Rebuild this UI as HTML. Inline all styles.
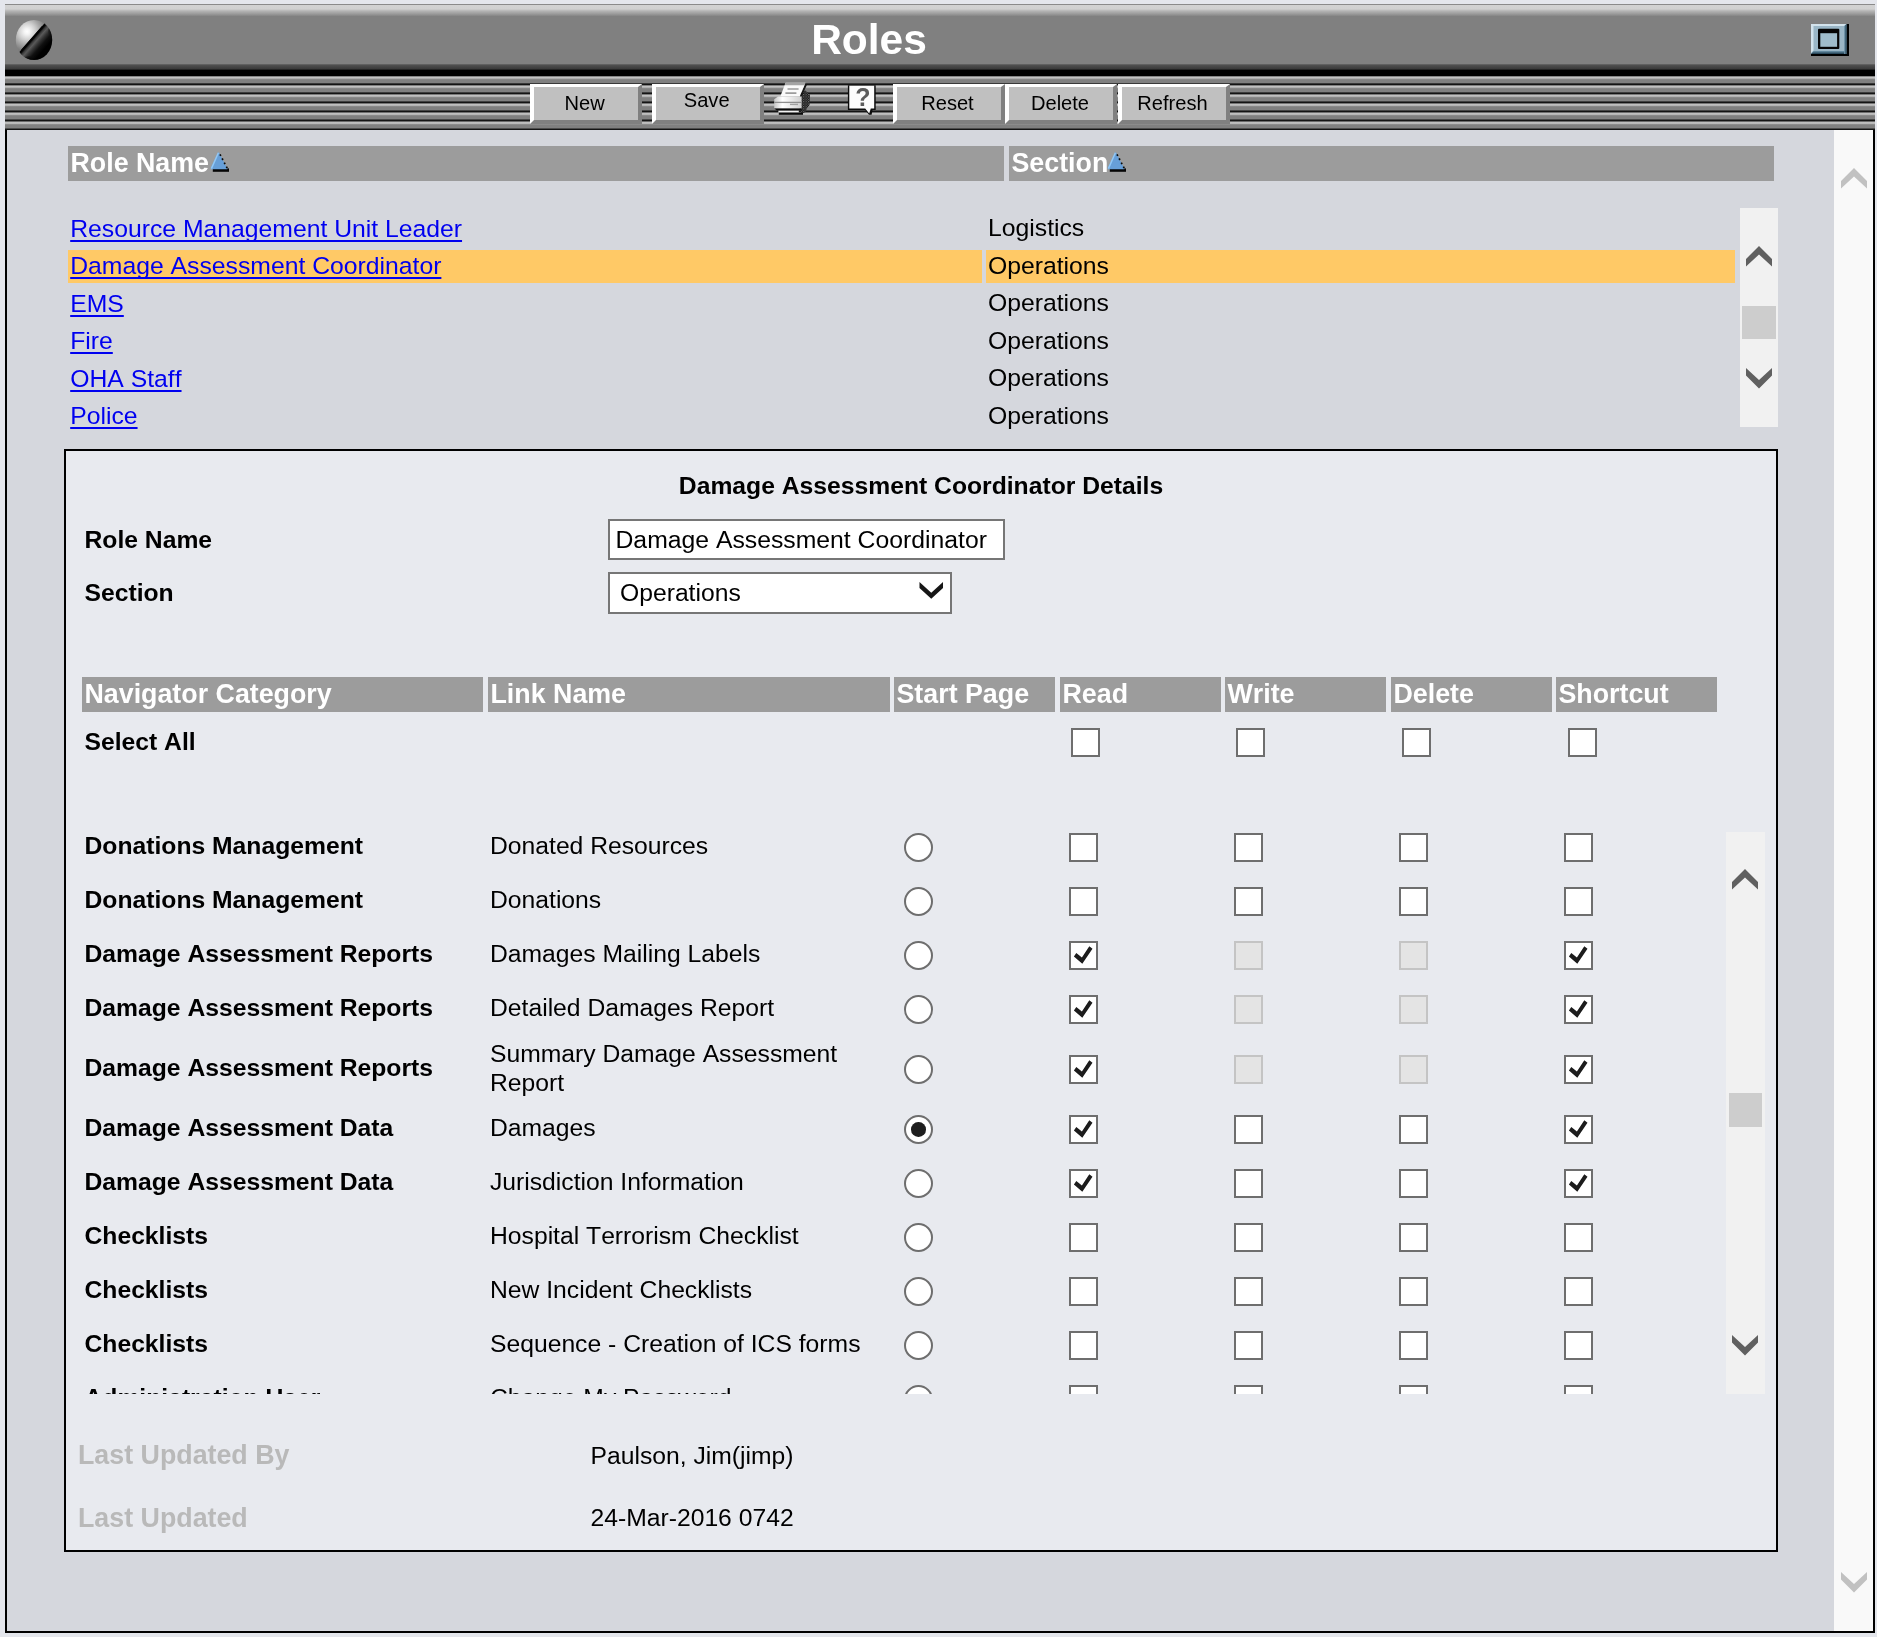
<!DOCTYPE html>
<html lang="en">
<head>
<meta charset="utf-8">
<title>Roles</title>
<style>
html,body{margin:0;padding:0;}
body{width:1877px;height:1637px;overflow:hidden;position:relative;background:#e4e6ec;font-family:"Liberation Sans",sans-serif;font-size:24.7px;font-kerning:none;color:#000;}
div,span,a{box-sizing:border-box;}
#wrap{position:absolute;left:0;top:0;width:1877px;height:1637px;overflow:hidden;will-change:transform;}
.abs{position:absolute;}
/* header */
#hdr{position:absolute;left:5px;top:4px;width:1870px;height:72px;background:linear-gradient(to bottom,#8a8a8a 0,#8a8a8a 1px,#d2d2d2 1px,#d0d0d0 5px,#b4b4b4 7px,#9a9a9a 10px,#808080 12.5px,#808080 59.5px,#505050 61px,#454545 63px,#3a3a3a 65px,#000 66.3px,#000 72px);}
#title{position:absolute;left:0;top:0;width:1728px;text-align:center;font-weight:bold;font-size:42.5px;line-height:72px;color:#fff;white-space:nowrap;}
#tb{position:absolute;left:5px;top:75.8px;width:1870px;height:54.2px;background:repeating-linear-gradient(to bottom,#404040 0,#b0b0b0 0.8px,#c3c3c3 1.5px,#c3c3c3 2.1px,#929292 3.0px,#808080 3.8px,#808080 6.6px,#4c4c4c 7.3px,#141414 7.9px,#141414 8.5px,#404040 9.04px);}
.btn{position:absolute;top:84px;height:40px;width:112px;background:#c0c0c0;border-style:solid;border-width:3px 4px 4px 4px;border-color:#fff #808080 #808080 #fff;font-size:20.1px;text-align:center;line-height:33px;padding-right:2.6px;white-space:nowrap;}
/* main panel */
#panel{position:absolute;left:5px;top:130px;width:1870px;height:1503px;border:2px solid #000;border-top:0;background:#d5d7dd;}
#vsb{position:absolute;left:1834px;top:130px;width:39px;height:1501px;background:#f9f9f9;}
.hd{position:absolute;background:#9c9c9c;color:#fff;font-weight:bold;white-space:nowrap;}
.lh{top:146px;height:35px;line-height:34.4px;font-size:26.8px;padding-left:2.5px;}
.row{position:absolute;left:70.2px;font-size:24.74px;height:32px;line-height:32px;white-space:nowrap;}
.row a{color:#0000f0;text-decoration:underline;text-decoration-skip-ink:none;text-underline-offset:3px;text-decoration-thickness:1.8px;}
.sec{position:absolute;left:988px;font-size:24.74px;height:32px;line-height:32px;white-space:nowrap;}
.hl{position:absolute;top:250px;height:33px;background:#ffc966;}
#box{position:absolute;left:64px;top:449px;width:1714px;height:1103px;border:2px solid #000;background:#e8eaef;}
.th{top:677px;height:35px;line-height:34.6px;font-size:26.8px;padding-left:2.5px;}
.b{font-weight:bold;}
.tclip{position:absolute;left:64px;width:1714px;overflow:hidden;}
.cat{position:absolute;left:20.5px;font-weight:bold;line-height:32px;white-space:nowrap;}
.lnk{position:absolute;left:426px;line-height:29px;white-space:nowrap;}
.lnk{padding-top:1.5px}
.rad{position:absolute;left:840px;width:29px;height:29px;border-radius:50%;border:2px solid #6e6e6e;background:#fff;}
.rad.on::after{content:"";position:absolute;left:5.2px;top:5.2px;width:14.6px;height:14.6px;border-radius:50%;background:#1e1e1e;}
.cb{position:absolute;width:29px;height:29px;border:2px solid #6e6e6e;background:#fff;}
.cb.dis{border-color:#c4c4c4;background:#e4e4e4;}
.cb.ck::after{content:"";position:absolute;left:0;top:0;width:25px;height:25px;background:#1c1c1c;clip-path:polygon(2.9px 13.5px,5.3px 10.1px,10.9px 14.5px,18.3px 3.2px,21.5px 5.7px,11.3px 20.8px);}
.sb{position:absolute;background:#f1f1f1;}
.thumb{position:absolute;background:#cdcdcd;}
.gl{color:#b9b9b9;font-weight:bold;position:absolute;white-space:nowrap;line-height:32px;font-size:26.8px;}
.val{position:absolute;white-space:nowrap;line-height:32px;}
svg{position:absolute;overflow:visible;}

</style>
</head>
<body>
<div id="wrap">
<div id="panel"></div>
<div id="vsb"></div>
<svg style="left:1841px;top:168px" width="26" height="21" viewBox="0 0 26 21"><path d="M0 13 L13 0 L26 13 L26 20.5 L13 8.5 L0 20.5 Z" fill="#c1c1c1"/></svg>
<svg style="left:1841px;top:1572px" width="26" height="21" viewBox="0 0 26 21"><path d="M0 0 L13 12 L26 0 L26 7.5 L13 20.5 L0 7.5 Z" fill="#c1c1c1"/></svg>

<div id="hdr"><div id="title">Roles</div></div>
<div id="tb"></div>
<svg style="left:15px;top:19px" width="38" height="42" viewBox="0 0 38 42">
 <defs>
  <radialGradient id="bg1" gradientUnits="userSpaceOnUse" cx="12" cy="12.5" r="24"><stop offset="0" stop-color="#ffffff"/><stop offset="0.12" stop-color="#f4f4f4"/><stop offset="0.35" stop-color="#cfcfcf"/><stop offset="0.55" stop-color="#a8a8a8"/><stop offset="0.8" stop-color="#808080"/><stop offset="1" stop-color="#707070"/></radialGradient>
  <linearGradient id="bg2" gradientUnits="userSpaceOnUse" x1="17" y1="18.5" x2="29.8" y2="29.7"><stop offset="0" stop-color="#000"/><stop offset="0.1" stop-color="#040404"/><stop offset="0.2" stop-color="#3a3a3a"/><stop offset="0.32" stop-color="#5a5a5a"/><stop offset="0.5" stop-color="#343434"/><stop offset="0.72" stop-color="#101010"/><stop offset="1" stop-color="#000"/></linearGradient>
  <radialGradient id="bg3" cx="0.5" cy="0.5" r="0.5"><stop offset="0.8" stop-color="#000" stop-opacity="0"/><stop offset="1" stop-color="#000" stop-opacity="0.45"/></radialGradient>
  <clipPath id="bc"><ellipse cx="19" cy="21" rx="18.2" ry="20.1"/></clipPath>
 </defs>
 <ellipse cx="19" cy="21" rx="18.2" ry="20.1" fill="url(#bg1)"/>
 <g clip-path="url(#bc)">
  <path d="M0 37.9 L32 1.6 L42 1 L42 46 L0 46 Z" fill="url(#bg2)"/>
  <path d="M34 8 L40 8 L40 44 L10 44 L10 38 Q30 36 34 8 Z" fill="url(#bg3)"/>
  <path d="M6.8 31.3 L27.6 7.6" stroke="#040404" stroke-width="1.6" fill="none"/>
 </g>
</svg>
<svg style="left:1811px;top:24px" width="38" height="32" viewBox="0 0 38 32">
 <defs><linearGradient id="mg1" x1="0" y1="0" x2="0" y2="1"><stop offset="0" stop-color="#6f97ae"/><stop offset="1" stop-color="#1d3a4c"/></linearGradient>
 <linearGradient id="mg2" x1="0" y1="0" x2="1" y2="0"><stop offset="0" stop-color="#6f97ae"/><stop offset="1" stop-color="#1d3a4c"/></linearGradient></defs>
 <path d="M0 29 H35 V0 H38 V32 H0 Z" fill="#000"/>
 <rect x="0" y="0" width="35.7" height="30" fill="#9ab6c6"/>
 <path d="M0 30 L2.6 27 H33.4 V30 Z" fill="url(#mg1)"/>
 <path d="M33.2 2 L35.7 0 V30 H33.2 Z" fill="url(#mg2)"/>
 <path d="M0 0 H35 L33 2.1 H2.5 V26.6 L0 29 Z" fill="#d3e3ec"/>
 <rect x="7" y="4.7" width="21.3" height="20.3" rx="1" fill="#050505"/>
 <rect x="9.3" y="9.2" width="16.8" height="13.6" fill="#9fbccb"/>
</svg>

<div class="btn" style="left:530px;">New</div>
<div class="btn" style="left:652px;line-height:27.6px">Save</div>
<div class="btn" style="left:893px;width:111.5px">Reset</div>
<div class="btn" style="left:1005.3px;">Delete</div>
<div class="btn" style="left:1118px;width:111.5px">Refresh</div>
<!-- printer icon -->
<svg style="left:772px;top:82px" width="40" height="34" viewBox="0 0 40 34">
 <defs><linearGradient id="pg" x1="0" y1="0" x2="1" y2="0"><stop offset="0" stop-color="#c8c8c8"/><stop offset="0.3" stop-color="#ffffff"/><stop offset="1" stop-color="#d0d0d0"/></linearGradient>
 <pattern id="pp" width="2.4" height="2.4" patternUnits="userSpaceOnUse"><rect width="2.4" height="2.4" fill="#101010"/><rect width="1.1" height="1.1" fill="#7a7a7a"/><rect x="1.2" y="1.2" width="1.1" height="1.1" fill="#585858"/></pattern></defs>
 <path d="M28 10.5 L33.5 8.5 L38 13 L37.6 23 L35 26 L33.5 30 L30 31.5 L27.5 28 Z" fill="url(#pp)"/>
 <path d="M33.4 1.2 L34.6 3.4 L29.6 14.4 L28 14 Z" fill="#161616"/>
 <path d="M13.6 0.8 H33.4 L27.8 14.2 H8.4 Z" fill="#fafafa"/>
 <path d="M13.6 0.8 H33.4 L32.4 3.2 H12.6 Z" fill="#a4a4a4"/>
 <path d="M15.5 7 H26.6 M13.4 11.2 H24.4" stroke="#9c9c9c" stroke-width="1.7"/>
 <path d="M2.2 17.2 L6 14.6 H29.6 V26.6 H2.2 Z" fill="url(#pg)"/>
 <path d="M2.2 20.4 H29.6" stroke="#8e8e8e" stroke-width="1.3"/>
 <path d="M18 22.4 H26" stroke="#a0a0a0" stroke-width="1.4"/>
 <path d="M2.2 26.4 H29.6 V28.4 H5 Z" fill="#0a0a0a"/>
 <path d="M6.4 28.7 H26.8 V30.6 H6.4 Z" fill="#f2f2f2"/>
 <path d="M6.8 30.6 H31 V32.8 H6.8 Z" fill="#0a0a0a"/>
</svg>
<!-- help icon -->
<svg style="left:847px;top:84px" width="31" height="32" viewBox="0 0 31 32">
 <path d="M0.9 1.2 H28.7 V26 H25.5 L24.6 30.8 H22 L18.2 26 H0.9 Z" fill="#0c0c0c"/>
 <path d="M2.3 1.8 H27.2 V24.5 H23.8 L22.2 29.6 L18.2 24.5 H2.3 Z" fill="#fcfcfc"/>
 <text x="16" y="21.9" text-anchor="middle" font-family="Liberation Sans, sans-serif" font-weight="bold" font-size="25" fill="#5c5c5c">?</text>
</svg>

<div class="hd lh" style="left:68px;width:936px">Role Name</div>
<div class="hd lh" style="left:1009px;width:765px">Section</div>
<svg style="left:210px;top:152px" width="20" height="20" viewBox="0 0 20 20"><path d="M2.8 16.4 H19 V19.8 H2.8 Z" fill="#050505"/><path d="M8.8 0.1 L17.3 16.4 V17.3 H0.9 V15.2 Z" fill="#679fd8"/><path d="M8.4 0.8 L1.4 16.6" stroke="#92c8f6" stroke-width="1.5" fill="none"/><path d="M10 2.4 L17.6 17" stroke="#0a0a0a" stroke-width="1.7" stroke-dasharray="1.7 2.9" fill="none"/></svg>
<svg style="left:1107px;top:152px" width="20" height="20" viewBox="0 0 20 20"><path d="M2.8 16.4 H19 V19.8 H2.8 Z" fill="#050505"/><path d="M8.8 0.1 L17.3 16.4 V17.3 H0.9 V15.2 Z" fill="#679fd8"/><path d="M8.4 0.8 L1.4 16.6" stroke="#92c8f6" stroke-width="1.5" fill="none"/><path d="M10 2.4 L17.6 17" stroke="#0a0a0a" stroke-width="1.7" stroke-dasharray="1.7 2.9" fill="none"/></svg>

<div class="hl" style="left:68px;width:914px"></div>
<div class="hl" style="left:986px;width:749px"></div>
<div class="row" style="top:212.7px"><a>Resource Management Unit Leader</a></div>
<div class="row" style="top:250.2px"><a>Damage Assessment Coordinator</a></div>
<div class="row" style="top:287.7px"><a>EMS</a></div>
<div class="row" style="top:325.2px"><a>Fire</a></div>
<div class="row" style="top:362.7px"><a>OHA Staff</a></div>
<div class="row" style="top:400.2px"><a>Police</a></div>
<div class="sec" style="top:212px">Logistics</div>
<div class="sec" style="top:249.5px">Operations</div>
<div class="sec" style="top:287px">Operations</div>
<div class="sec" style="top:324.5px">Operations</div>
<div class="sec" style="top:362px">Operations</div>
<div class="sec" style="top:399.5px">Operations</div>

<div class="sb" style="left:1740px;top:208px;width:38px;height:219px"></div>
<svg style="left:1746px;top:246px" width="26" height="21" viewBox="0 0 26 21"><path d="M0 13 L13 0 L26 13 L26 20.5 L13 8.5 L0 20.5 Z" fill="#606060"/></svg>
<div class="thumb" style="left:1742px;top:306px;width:34px;height:33px"></div>
<svg style="left:1746px;top:368px" width="26" height="21" viewBox="0 0 26 21"><path d="M0 0 L13 12 L26 0 L26 7.5 L13 20.5 L0 7.5 Z" fill="#606060"/></svg>

<div id="box"></div>
<div class="abs b" style="left:64px;top:469.7px;width:1714px;text-align:center;line-height:32px;white-space:nowrap">Damage Assessment Coordinator Details</div>
<div class="abs b" style="left:84.5px;top:523.6px;line-height:32px;white-space:nowrap">Role Name</div>
<div class="abs b" style="left:84.5px;top:576.6px;line-height:32px;white-space:nowrap">Section</div>
<div class="abs" style="left:608px;top:519px;width:397px;height:41px;border:2px solid #767676;background:#fff;line-height:37px;padding-left:5.5px;font-size:24.75px;white-space:nowrap;">Damage Assessment Coordinator</div>
<div class="abs" style="left:608px;top:572px;width:344px;height:42px;border:2px solid #767676;background:#fff;line-height:37px;padding-left:10px;white-space:nowrap;">Operations</div>
<svg style="left:919px;top:582px" width="24.5" height="17.2" viewBox="0 0 26 19"><path d="M0 0 L13 12 L26 0 L26 6.5 L13 18.5 L0 6.5 Z" fill="#161616"/></svg>

<div class="hd th" style="left:82px;width:401px">Navigator Category</div>
<div class="hd th" style="left:488px;width:402px">Link Name</div>
<div class="hd th" style="left:894px;width:161px">Start Page</div>
<div class="hd th" style="left:1060px;width:161px">Read</div>
<div class="hd th" style="left:1225px;width:161px">Write</div>
<div class="hd th" style="left:1391px;width:161px">Delete</div>
<div class="hd th" style="left:1556px;width:161px">Shortcut</div>
<div class="abs b" style="left:84.5px;top:725.6px;line-height:32px;white-space:nowrap">Select All</div>
<span class="cb" style="left:1071px;top:728px"></span>
<span class="cb" style="left:1236px;top:728px"></span>
<span class="cb" style="left:1402px;top:728px"></span>
<span class="cb" style="left:1568px;top:728px"></span>

<div class="sb" style="left:1726px;top:831.5px;width:39px;height:562.5px"></div>
<svg style="left:1732px;top:869px" width="26" height="21" viewBox="0 0 26 21"><path d="M0 13 L13 0 L26 13 L26 20.5 L13 8.5 L0 20.5 Z" fill="#606060"/></svg>
<div class="thumb" style="left:1729px;top:1093px;width:33px;height:34px"></div>
<svg style="left:1732px;top:1335px" width="26" height="21" viewBox="0 0 26 21"><path d="M0 0 L13 12 L26 0 L26 7.5 L13 20.5 L0 7.5 Z" fill="#606060"/></svg>
<div class="tclip" style="top:830px;height:564px">
<div class="cat" style="top:-0.2px">Donations Management</div><div class="lnk" style="top:-1.0px">Donated Resources</div><span class="rad" style="top:3.0px"></span><span class="cb" style="left:1005px;top:3.0px"></span><span class="cb" style="left:1170px;top:3.0px"></span><span class="cb" style="left:1335px;top:3.0px"></span><span class="cb" style="left:1500px;top:3.0px"></span>
<div class="cat" style="top:53.8px">Donations Management</div><div class="lnk" style="top:53.0px">Donations</div><span class="rad" style="top:57.0px"></span><span class="cb" style="left:1005px;top:57.0px"></span><span class="cb" style="left:1170px;top:57.0px"></span><span class="cb" style="left:1335px;top:57.0px"></span><span class="cb" style="left:1500px;top:57.0px"></span>
<div class="cat" style="top:107.8px">Damage Assessment Reports</div><div class="lnk" style="top:107.0px">Damages Mailing Labels</div><span class="rad" style="top:111.0px"></span><span class="cb ck" style="left:1005px;top:111.0px"></span><span class="cb dis" style="left:1170px;top:111.0px"></span><span class="cb dis" style="left:1335px;top:111.0px"></span><span class="cb ck" style="left:1500px;top:111.0px"></span>
<div class="cat" style="top:161.8px">Damage Assessment Reports</div><div class="lnk" style="top:161.0px">Detailed Damages Report</div><span class="rad" style="top:165.0px"></span><span class="cb ck" style="left:1005px;top:165.0px"></span><span class="cb dis" style="left:1170px;top:165.0px"></span><span class="cb dis" style="left:1335px;top:165.0px"></span><span class="cb ck" style="left:1500px;top:165.0px"></span>
<div class="cat" style="top:221.8px">Damage Assessment Reports</div><div class="lnk" style="top:207.3px">Summary Damage Assessment<br>Report</div><span class="rad" style="top:225.0px"></span><span class="cb ck" style="left:1005px;top:225.0px"></span><span class="cb dis" style="left:1170px;top:225.0px"></span><span class="cb dis" style="left:1335px;top:225.0px"></span><span class="cb ck" style="left:1500px;top:225.0px"></span>
<div class="cat" style="top:281.8px">Damage Assessment Data</div><div class="lnk" style="top:281.0px">Damages</div><span class="rad on" style="top:285.0px"></span><span class="cb ck" style="left:1005px;top:285.0px"></span><span class="cb" style="left:1170px;top:285.0px"></span><span class="cb" style="left:1335px;top:285.0px"></span><span class="cb ck" style="left:1500px;top:285.0px"></span>
<div class="cat" style="top:335.8px">Damage Assessment Data</div><div class="lnk" style="top:335.0px">Jurisdiction Information</div><span class="rad" style="top:339.0px"></span><span class="cb ck" style="left:1005px;top:339.0px"></span><span class="cb" style="left:1170px;top:339.0px"></span><span class="cb" style="left:1335px;top:339.0px"></span><span class="cb ck" style="left:1500px;top:339.0px"></span>
<div class="cat" style="top:389.8px">Checklists</div><div class="lnk" style="top:389.0px">Hospital Terrorism Checklist</div><span class="rad" style="top:393.0px"></span><span class="cb" style="left:1005px;top:393.0px"></span><span class="cb" style="left:1170px;top:393.0px"></span><span class="cb" style="left:1335px;top:393.0px"></span><span class="cb" style="left:1500px;top:393.0px"></span>
<div class="cat" style="top:443.8px">Checklists</div><div class="lnk" style="top:443.0px">New Incident Checklists</div><span class="rad" style="top:447.0px"></span><span class="cb" style="left:1005px;top:447.0px"></span><span class="cb" style="left:1170px;top:447.0px"></span><span class="cb" style="left:1335px;top:447.0px"></span><span class="cb" style="left:1500px;top:447.0px"></span>
<div class="cat" style="top:497.8px">Checklists</div><div class="lnk" style="top:497.0px">Sequence - Creation of ICS forms</div><span class="rad" style="top:501.0px"></span><span class="cb" style="left:1005px;top:501.0px"></span><span class="cb" style="left:1170px;top:501.0px"></span><span class="cb" style="left:1335px;top:501.0px"></span><span class="cb" style="left:1500px;top:501.0px"></span>
<div class="cat" style="top:551.8px">Administration User</div><div class="lnk" style="top:551.0px">Change My Password</div><span class="rad" style="top:555.0px"></span><span class="cb" style="left:1005px;top:555.0px"></span><span class="cb" style="left:1170px;top:555.0px"></span><span class="cb" style="left:1335px;top:555.0px"></span><span class="cb" style="left:1500px;top:555.0px"></span>
</div>
<div class="gl" style="left:78px;top:1438.8px">Last Updated By</div>
<div class="val" style="left:590.5px;top:1440px">Paulson, Jim(jimp)</div>
<div class="gl" style="left:78px;top:1501.8px">Last Updated</div>
<div class="val" style="left:590.5px;top:1502px">24-Mar-2016 0742</div>
</div>
</body>
</html>
